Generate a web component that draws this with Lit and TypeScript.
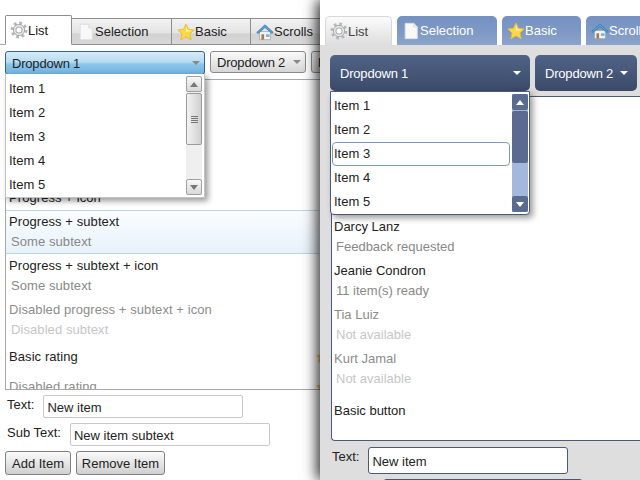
import { LitElement, html, css, svg } from 'lit';
import { customElement } from 'lit/decorators.js';

const gear = () => svg`<svg class="ico" viewBox="0 0 20 20">
  <circle cx="10" cy="10" r="7.6" fill="none" stroke="#b4b8bc" stroke-width="3.6" stroke-dasharray="3 2.97"/>
  <circle cx="10" cy="10" r="6.2" fill="#e8eaec" stroke="#a0a4a8" stroke-width="1"/>
  <circle cx="10" cy="10" r="3.4" fill="#fff" stroke="#a8acb0" stroke-width="1.2"/>
</svg>`;

const page = () => svg`<svg class="ico" viewBox="0 0 20 20">
  <path d="M3.5 1.5H13L17 5.5V18.5H3.5Z" fill="#f8f8f8" stroke="#dcdcdc"/>
  <path d="M13 1.5V5.5H17" fill="#ececec" stroke="#dcdcdc"/>
</svg>`;

const star = () => svg`<svg class="ico" viewBox="0 0 20 20">
  <path d="M10 1.2L12.8 7L19 7.8L14.4 12.2L15.7 18.6L10 15.4L4.3 18.6L5.6 12.2L1 7.8L7.2 7Z" fill="#fbd944" stroke="#ecb840" stroke-width="1" stroke-linejoin="round"/>
  <path d="M10 3.5L12 7.8L16.5 8.5L10 10Z" fill="#fff0a0"/>
</svg>`;

const house = () => svg`<svg class="ico" viewBox="0 0 20 20">
  <path d="M4 9.5H16V18.5H4Z" fill="#f4f4f4" stroke="#9aa4ac" stroke-width=".8"/>
  <path d="M.8 10.5L10 2L19.2 10.5L17.6 11.6L10 5L2.4 11.6Z" fill="#5aa0d0" stroke="#2f78a8" stroke-width=".8" stroke-linejoin="round"/>
  <path d="M6 12.5H9V18.5H6Z" fill="#a87a50"/>
  <path d="M11 12.5H15V15.5H11Z" fill="#78b4dc"/>
</svg>`;

const tabs = [
  { label: 'Selection', icon: page, cls: 'w-sel' },
  { label: 'Basic', icon: star, cls: 'w-basic' },
  { label: 'Scrolls', icon: house, cls: 'w-scroll' },
];

const items = ['Item 1', 'Item 2', 'Item 3', 'Item 4', 'Item 5'];

const leftRows = [
  { title: 'Progress + subtext', sub: 'Some subtext', cls: 'sel' },
  { title: 'Progress + subtext + icon', sub: 'Some subtext', cls: '' },
  { title: 'Disabled progress + subtext + icon', sub: 'Disabled subtext', cls: 'off' },
];

const rightRows = [
  { title: 'Darcy Lanz', sub: 'Feedback requested', cls: '' },
  { title: 'Jeanie Condron', sub: '11 item(s) ready', cls: '' },
  { title: 'Tia Luiz', sub: 'Not available', cls: 'off' },
  { title: 'Kurt Jamal', sub: 'Not available', cls: 'off' },
];

@customElement('app-root')
export class AppRoot extends LitElement {
  static styles = css`
    :host {
      display: flex;
      width: 640px;
      height: 480px;
      overflow: hidden;
      background: #fff;
      font-family: 'Liberation Sans', Arial, sans-serif;
      font-size: 13px;
      color: #222;
    }
    * { box-sizing: border-box; }
    .ico { width: 18px; height: 18px; flex: none; }

    .left, .right {
      width: 320px;
      height: 480px;
      flex: none;
      display: flex;
      flex-direction: column;
      overflow: hidden;
    }
    .right {
      position: relative;
      z-index: 1;
      box-shadow: -3px 0 13px rgba(0, 0, 0, 0.85);
      background: #fff;
    }

    /* tab strips */
    .tabs { display: flex; align-items: flex-end; height: 45px; flex: none; padding-left: 5px; }
    .left .tabs { border-bottom: 1px solid #a8a8a8; }
    .tab {
      display: flex;
      align-items: center;
      flex: none;
      padding-left: 4px;
      height: 26px;
      font-size: 13px;
      white-space: nowrap;
    }
    .tab.first { width: 67px; }
    .w-sel { width: 100px; padding-left: 5px; }
    .w-basic { width: 79px; padding-left: 5px; }
    .w-scroll { width: 80px; padding-left: 5px; }
    .left .tab {
      margin-bottom: -1px;
      height: 27px;
      border: 1px solid #8e8e8e;
      border-left-width: 0;
      background: linear-gradient(#f2f2f2, #e4e4e4 55%, #d2d2d2 60%, #d8d8d8);
    }
    .left .tab.first {
      height: 30px;
      border-left-width: 1px;
      border-bottom-color: #fff;
      background: #fff;
      border-radius: 2px 2px 0 0;
    }
    .right .tabs { gap: 5px; background: #fff; }
    .right .tab {
      height: 29px;
      border-radius: 5px 5px 0 0;
      background: linear-gradient(#7591c2, #7f9ac6 60%, #8ba4cb);
      color: #fff;
    }
    .right .tab.first {
      background: linear-gradient(#fbfbfb, #dedede);
      border: 1px solid #d8d8d8;
      border-bottom: 0;
      color: #444;
      padding-left: 4px;
    }

    /* dropdown row */
    .bar { display: flex; gap: 5px; flex: none; }
    .left .bar { padding: 6px 0 0 5px; height: 34px; align-items: flex-start; }
    .right .bar { padding: 10px 0 0 10px; height: 51px; align-items: flex-start; }
    .drop {
      position: relative;
      display: flex;
      align-items: center;
      justify-content: space-between;
      flex: none;
      white-space: nowrap;
    }
    .left .drop {
      height: 22px;
      padding: 0 4px 0 6px;
      border: 1px solid #8a8a8a;
      border-radius: 3px;
      letter-spacing: -0.2px;
      background: linear-gradient(#fafafa, #e8e8e8 50%, #d6d6d6);
    }
    .left .drop.open {
      height: 24px;
      border-color: #35648a;
      background: linear-gradient(#d7ecf8, #b6dcf2 45%, #8cc6ea 55%, #6fb2de);
    }
    .right .drop {
      height: 36px;
      padding: 0 9px 0 10px;
      border-radius: 5px;
      letter-spacing: -0.2px;
      background: linear-gradient(#506386, #3b4a69);
      color: #fff;
    }
    .d1 { width: 200px; }
    .d2 { width: 96px; }
    .right .d2 { width: 102px; }
    .d3 { width: 60px; }
    .caret {
      width: 0;
      height: 0;
      flex: none;
      border: 4px solid transparent;
      border-top: 4px solid #888;
      border-bottom: 0;
    }
    .right .caret { border-top-color: #fff; }

    /* popups */
    .popup {
      position: absolute;
      z-index: 3;
      left: -1px;
      width: 200px;
      display: flex;
      justify-content: space-between;
      letter-spacing: 0;
      background: #fff;
      color: #222;
      box-shadow: 3px 3px 6px rgba(0, 0, 0, 0.4);
    }
    .left .popup { top: 22px; height: 124px; padding: 3px 2px 2px 3px; border: 1px solid #c4c4c4; border-top: 0; }
    .right .popup {
      left: 0;
      top: 36px;
      height: 124px;
      padding: 2px 1px 2px 1px;
      border: 1px solid #4a5a78;
      border-radius: 0 0 4px 4px;
    }
    .opts { flex: 1; }
    .opt { height: 24px; line-height: 24px; padding-left: 0; }
    .right .opt { margin-right: 2px; border: 1px solid transparent; line-height: 22px; padding-left: 1px; }
    .right .opt.cur { border-color: #7f9abf; border-radius: 4px; }

    .sb { width: 16px; display: flex; flex-direction: column; flex: none; }
    .left .popup .sb { margin-top: -1px; }
    .left .sb { background: #efefef; }
    .right .sb { background: #a3b8da; }
    .sb-btn {
      height: 16px;
      flex: none;
      display: flex;
      align-items: center;
      justify-content: center;
      border-radius: 2px;
    }
    .left .sb-btn { border: 1px solid #a0a0a0; background: linear-gradient(#f8f8f8, #d8d8d8); }
    .right .sb-btn { background: #5a6b8f; }
    .thumb { height: 52px; margin-top: 1px; flex: none; border-radius: 2px; display: flex; flex-direction: column; gap: 1px; align-items: center; justify-content: center; }
    .left .thumb { border: 1px solid #9a9a9a; background: linear-gradient(90deg, #f2f2f2, #d0d0d0); }
    .right .thumb { background: #5a6b8f; }
    .grip { width: 7px; height: 1px; background: #777; }
    .right .grip { display: none; }
    .fill { flex: 1; }
    .up, .down { width: 0; height: 0; border: 4px solid transparent; }
    .up { border-top: 0; border-bottom: 5px solid #777; }
    .down { border-bottom: 0; border-top: 5px solid #777; }
    .right .up { border-bottom-color: #fff; }
    .right .down { border-top-color: #fff; }

    /* lists */
    .list { flex: none; overflow: hidden; background: #fff; }
    .left .list {
      height: 311px;
      margin-left: 5px;
      width: 330px;
      padding-top: 106px;
      border: 1px solid #a8a8a8;
      border-right: 0;
    }
    .right .list {
      height: 345px;
      margin-left: 11px;
      width: 330px;
      padding-top: 118px;
      border: 1px solid #4a5a78;
      border-right: 0;
      border-radius: 0 0 0 4px;
    }
    .panel { flex: 1; display: flex; flex-direction: column; }
    .right .panel { background: #dedede; }
    .row { height: 44px; padding: 4px 3px; display: flex; flex-direction: column; gap: 4px; line-height: 16px; white-space: nowrap; }
    .left .row { width: 313px; letter-spacing: 0.08px; }
    .row.single { height: 24px; justify-content: center; padding: 0 3px; }
    .row.tall { height: 30px; flex-direction: row; justify-content: space-between; align-items: center; padding: 0 0 0 3px; }
    .row.btn { height: 40px; justify-content: center; padding: 0 2px; }
    .row.sel {
      border: 1px solid #bcd6e6;
      border-width: 1px 0;
      background: linear-gradient(#fafdff, #e8f2fb);
    }
    .row.sel { padding-top: 3px; padding-bottom: 3px; }
    .sub { color: #888; padding-left: 2px; }
    .row.off { color: #8c8c8c; }
    .row.off .sub { color: #c6c6c6; }
    .right .row { padding-left: 2px; }
    .tiny { width: 12px; height: 12px; margin-right: -9px; flex: none; display: flex; }
    .tiny .ico { width: 12px; height: 12px; }

    /* form */
    .form { display: flex; flex-direction: column; flex: none; }
    .left .form { padding: 5px 0 0 5px; gap: 5px; }
    .right .form { padding: 6px 0 0 11px; }
    .field { display: flex; align-items: flex-start; gap: 9px; height: 23px; }
    .field label { padding: 2px 0 0 2px; flex: none; }
    .right .field label { padding-left: 1px; }
    .input {
      width: 200px;
      height: 23px;
      line-height: 23px;
      padding-left: 3px;
      border: 1px solid #c8c8c8;
      border-radius: 2px;
      background: #fff;
      color: #222;
    }
    .right .field { height: 27px; }
    .right .input { height: 27px; line-height: 27px; padding-left: 3px; border: 1px solid #4a5a78; border-radius: 3px; }
    .btns { display: flex; gap: 5px; }
    .push {
      height: 24px;
      display: flex;
      align-items: center;
      justify-content: center;
      white-space: nowrap;
      border: 1px solid #808080;
      border-radius: 3px;
      background: linear-gradient(#fafafa, #e6e6e6 50%, #cfcfcf);
    }
    .w-add { width: 66px; }
    .w-rem { width: 89px; }
    .stub {
      margin: 5px 0 0 63px;
      width: 200px;
      height: 10px;
      border-radius: 4px 4px 0 0;
      background: #47577a;
      flex: none;
    }
  `;

  private tabStrip() {
    return html`<div class="tabs">
      <div class="tab first">${gear()}List</div>
      ${tabs.map((t) => html`<div class="tab ${t.cls}">${t.icon()}${t.label}</div>`)}
    </div>`;
  }

  private scrollbar() {
    return html`<div class="sb">
      <div class="sb-btn"><span class="up"></span></div>
      <div class="thumb">
        <span class="grip"></span><span class="grip"></span><span class="grip"></span><span class="grip"></span>
      </div>
      <div class="fill"></div>
      <div class="sb-btn"><span class="down"></span></div>
    </div>`;
  }

  private popup(current: string) {
    return html`<div class="popup">
      <div class="opts">
        ${items.map((i) => html`<div class="opt ${i === current ? 'cur' : ''}">${i}</div>`)}
      </div>
      ${this.scrollbar()}
    </div>`;
  }

  private dropdowns(current: string) {
    return html`<div class="bar">
      <div class="drop d1 open">Dropdown 1<span class="caret"></span>${this.popup(current)}</div>
      <div class="drop d2">Dropdown 2<span class="caret"></span></div>
      <div class="drop d3">Dropdown 3</div>
    </div>`;
  }

  render() {
    return html`
      <section class="left">
        ${this.tabStrip()}
        <div class="panel">
          ${this.dropdowns('')}
          <div class="list">
            <div class="row single">Progress + icon</div>
            ${leftRows.map(
              (r) => html`<div class="row ${r.cls}"><span>${r.title}</span><span class="sub">${r.sub}</span></div>`
            )}
            <div class="row tall"><span>Basic rating</span><span class="tiny">${star()}</span></div>
            <div class="row tall off"><span>Disabled rating</span><span class="tiny">${star()}</span></div>
          </div>
          <div class="form">
            <div class="field"><label>Text:</label><div class="input">New item</div></div>
            <div class="field"><label>Sub Text:</label><div class="input">New item subtext</div></div>
            <div class="btns">
              <div class="push w-add">Add Item</div>
              <div class="push w-rem">Remove Item</div>
            </div>
          </div>
        </div>
      </section>
      <section class="right">
        ${this.tabStrip()}
        <div class="panel">
          ${this.dropdowns('Item 3')}
          <div class="list">
            ${rightRows.map(
              (r) => html`<div class="row ${r.cls}"><span>${r.title}</span><span class="sub">${r.sub}</span></div>`
            )}
            <div class="row btn">Basic button</div>
          </div>
          <div class="form">
            <div class="field"><label>Text:</label><div class="input">New item</div></div>
          </div>
          <div class="stub"></div>
        </div>
      </section>
    `;
  }
}
